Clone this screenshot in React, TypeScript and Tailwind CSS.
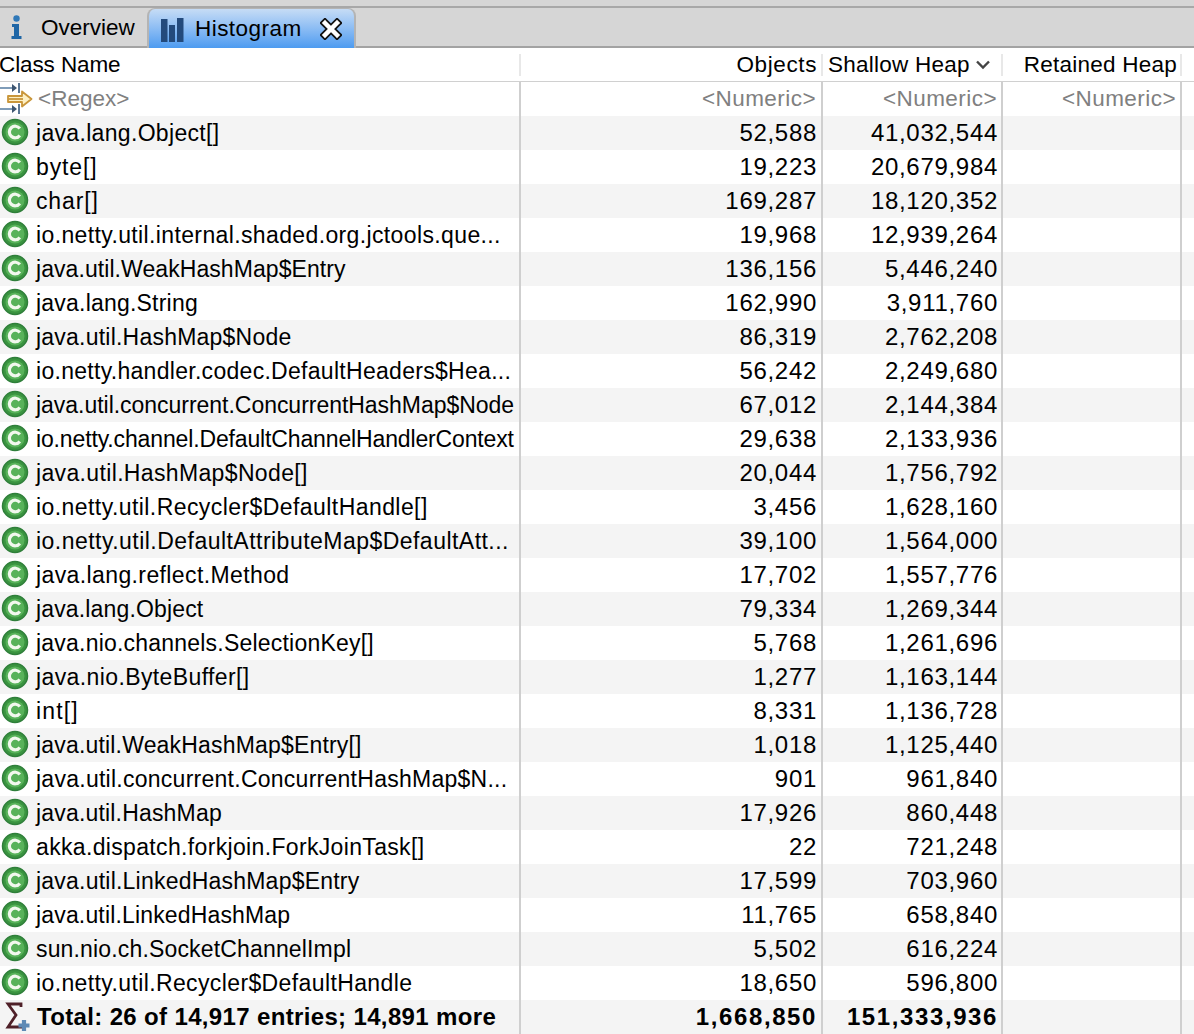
import React, { ReactElement } from "react";

// name, objects, shallow heap, letter spacing of the name (px)
const rows: [string, string, string, number][] = [
  ["java.lang.Object[]", "52,588", "41,032,544", 0.32],
  ["byte[]", "19,223", "20,679,984", 0.87],
  ["char[]", "169,287", "18,120,352", 0.87],
  ["io.netty.util.internal.shaded.org.jctools.que...", "19,968", "12,939,264", 0.37],
  ["java.util.WeakHashMap$Entry", "136,156", "5,446,240", 0.07],
  ["java.lang.String", "162,990", "3,911,760", 0.21],
  ["java.util.HashMap$Node", "86,319", "2,762,208", 0.22],
  ["io.netty.handler.codec.DefaultHeaders$Hea...", "56,242", "2,249,680", 0.29],
  ["java.util.concurrent.ConcurrentHashMap$Node", "67,012", "2,144,384", -0.03],
  ["io.netty.channel.DefaultChannelHandlerContext", "29,638", "2,133,936", -0.14],
  ["java.util.HashMap$Node[]", "20,044", "1,756,792", 0.35],
  ["io.netty.util.Recycler$DefaultHandle[]", "3,456", "1,628,160", 0.43],
  ["io.netty.util.DefaultAttributeMap$DefaultAtt...", "39,100", "1,564,000", 0.47],
  ["java.lang.reflect.Method", "17,702", "1,557,776", 0.39],
  ["java.lang.Object", "79,334", "1,269,344", 0.15],
  ["java.nio.channels.SelectionKey[]", "5,768", "1,261,696", 0.21],
  ["java.nio.ByteBuffer[]", "1,277", "1,163,144", 0.39],
  ["int[]", "8,331", "1,136,728", 1.17],
  ["java.util.WeakHashMap$Entry[]", "1,018", "1,125,440", 0.18],
  ["java.util.concurrent.ConcurrentHashMap$N...", "901", "961,840", 0.26],
  ["java.util.HashMap", "17,926", "860,448", 0.18],
  ["akka.dispatch.forkjoin.ForkJoinTask[]", "22", "721,248", 0.34],
  ["java.util.LinkedHashMap$Entry", "17,599", "703,960", 0.22],
  ["java.util.LinkedHashMap", "11,765", "658,840", 0.16],
  ["sun.nio.ch.SocketChannelImpl", "5,502", "616,224", 0.16],
  ["io.netty.util.Recycler$DefaultHandle", "18,650", "596,800", 0.38],
];

const grid = "grid grid-cols-[521px_301px_181px_179px_12px] h-[34px] items-center leading-[30px]";

function ClassIcon(): ReactElement {
  return (
    <svg width="28" height="28" viewBox="0 0 28 28" className="shrink-0 -mt-[3px]">
      <circle cx="14" cy="14" r="12.5" fill="#3a9440" stroke="#2f7f3a" strokeWidth="1.5" />
      <circle cx="14" cy="14" r="9.500" fill="#58b25a" />
      <path d="M18.800 10.500a5.800 5.800 0 1 0 0 7" fill="none" stroke="#f2f8ee" strokeWidth="3.200" />
    </svg>
  );
}

function RegexIcon(): ReactElement {
  return (
    <svg width="34" height="34" viewBox="0 0 34 34" className="shrink-0">
      <path d="M0 6h13M0 27h13" fill="none" stroke="#7f9cb8" strokeWidth="2" />
      <path d="M12 2l5 4-5 4zM12 23l5 4-5 4z" fill="#3d5570" />
      <path d="M19 1v10M19 22v10" stroke="#5a7694" strokeWidth="2" />
      <path d="M8 14h14v-4.500l9.500 7.500-9.500 7.500V20H8z" fill="#fdf0c4" stroke="#c9963a" strokeWidth="1.800" strokeLinejoin="round" />
      <path d="M8 17h15" stroke="#c9963a" strokeWidth="1.800" />
    </svg>
  );
}

function SumIcon(): ReactElement {
  return (
    <svg width="32" height="34" viewBox="0 0 32 34" className="shrink-0">
      <path d="M20 7V4H7l8 11-8 12h14v-3" fill="none" stroke="#4f2028" strokeWidth="2.800" />
      <path d="M23 20v11M17.500 25.500h11" stroke="#5f8ab5" strokeWidth="4.200" />
    </svg>
  );
}

function ColumnLines(): ReactElement {
  return (
    <div className="absolute left-0 top-0 bottom-0 w-full pointer-events-none">
      <div className="absolute top-0 bottom-0 left-[519px] w-[2px] bg-[#cfcfcf]" />
      <div className="absolute top-0 bottom-0 left-[821px] w-[2px] bg-[#cfcfcf]" />
      <div className="absolute top-0 bottom-0 left-[1001px] w-[2px] bg-[#cfcfcf]" />
      <div className="absolute top-0 bottom-0 left-[1180px] w-[2px] bg-[#cfcfcf]" />
    </div>
  );
}

export default function App(): ReactElement {
  return (
    <div className="w-[1194px] h-[1034px] overflow-hidden bg-white text-[23px] text-black font-['Liberation_Sans',Arial,sans-serif]">
      {/* tab strip */}
      <div className="h-[48px] bg-[#d6d6d6] border-b-[2px] border-[#a3a3a3]">
        <div className="h-[8px] border-b-[2px] border-[#a8a8a8]" />
        <div className="flex h-[38px]">
          <div className="flex items-center w-[147px] pl-[11px]">
            <svg width="11" height="24" viewBox="0 0 11 24" className="shrink-0">
              <circle cx="5.500" cy="3.500" r="3.200" fill="#2f78b8" />
              <path d="M1 9h7v12h2.500v3H.500v-3H3v-9H1z" fill="#1f66a6" />
            </svg>
            <span className="ml-[19px] mt-[2px] text-[22.5px]">Overview</span>
          </div>
          <div className="flex items-center w-[209px] h-[40px] pl-[12px] rounded-t-[8px] bg-gradient-to-b from-[#c6dcf5] to-[#4c9bf0] border-x-2 border-t border-[#b4b4b4]">
            <svg width="23" height="24" viewBox="0 0 23 24" className="shrink-0 mt-[2px]">
              <path d="M0 1h6.500v23H0zM8 7h6v17H8zM16 0h6.500v24H16z" fill="#234a7c" />
            </svg>
            <span className="ml-[11px] text-[22.5px] tracking-[0.45px]">Histogram</span>
            <svg width="22" height="22" viewBox="0 0 22 22" className="ml-[18px] shrink-0">
              <path d="M5 5l12 12M17 5L5 17" stroke="#111" strokeWidth="8" strokeLinecap="square" />
              <path d="M5 5l12 12M17 5L5 17" stroke="#fff" strokeWidth="4.500" strokeLinecap="square" />
            </svg>
          </div>
        </div>
      </div>

      {/* column headers */}
      <div className="relative h-[34px] border-b-[1px] border-[#d0d0d0] grid grid-cols-[521px_301px_181px_179px_12px] items-center text-[22.5px]">
        <div className="absolute top-[6px] bottom-[5px] left-[519px] w-[2px] bg-[#e8e8e8]" />
        <div className="absolute top-[6px] bottom-[5px] left-[821px] w-[2px] bg-[#e8e8e8]" />
        <div className="absolute top-[6px] bottom-[5px] left-[1001px] w-[2px] bg-[#e8e8e8]" />
        <div className="absolute top-[6px] bottom-[5px] left-[1180px] w-[2px] bg-[#e8e8e8]" />
        <div className="tracking-[-0.1px] -ml-[1px]">Class Name</div>
        <div className="text-right pr-[5px] tracking-[0.6px]">Objects</div>
        <div className="flex items-center pl-[6px]">
          <span className="tracking-[0.25px]">Shallow Heap</span>
          <svg width="14" height="10" viewBox="0 0 14 10" className="ml-[6px]">
            <path d="M1 1.500l6 6 6-6" fill="none" stroke="#444" strokeWidth="2.400" />
          </svg>
        </div>
        <div className="text-right pr-[5px] tracking-[0.25px]">Retained Heap</div>
      </div>

      {/* table body */}
      <div className="relative">
        <div className={grid + " text-[#808080] text-[22.5px]"}>
          <div className="flex items-center gap-[4px]">
            <RegexIcon />
            <span>&lt;Regex&gt;</span>
          </div>
          <div className="text-right pr-[6px] tracking-[0.45px]">&lt;Numeric&gt;</div>
          <div className="text-right pr-[6px] tracking-[0.45px]">&lt;Numeric&gt;</div>
          <div className="text-right pr-[6px] tracking-[0.45px]">&lt;Numeric&gt;</div>
        </div>
        {rows.map(([name, objects, heap, spacing], i) => (
          <div key={name} className={grid + (i % 2 === 0 ? " bg-[#f4f4f4]" : " bg-white")}>
            <div className="flex items-center gap-[7px] pl-[1px] whitespace-nowrap">
              <ClassIcon />
              <span style={{ letterSpacing: spacing + "px" }}>{name}</span>
            </div>
            <div className="text-right pr-[5px] text-[24px] tracking-[0.7px]">{objects}</div>
            <div className="text-right pr-[5px] text-[24px] tracking-[0.7px]">{heap}</div>
            <div />
          </div>
        ))}
        <div className={grid + " bg-[#f4f4f4] font-bold"}>
          <div className="flex items-center gap-[4px] whitespace-nowrap pl-[1px]">
            <SumIcon />
            <span className="text-[24px] tracking-[0.35px]">Total: 26 of 14,917 entries; 14,891 more</span>
          </div>
          <div className="text-right pr-[5px] text-[24px] tracking-[1.6px]">1,668,850</div>
          <div className="text-right pr-[5px] text-[24px] tracking-[1.6px]">151,333,936</div>
          <div />
        </div>
        <ColumnLines />
      </div>
    </div>
  );
}
